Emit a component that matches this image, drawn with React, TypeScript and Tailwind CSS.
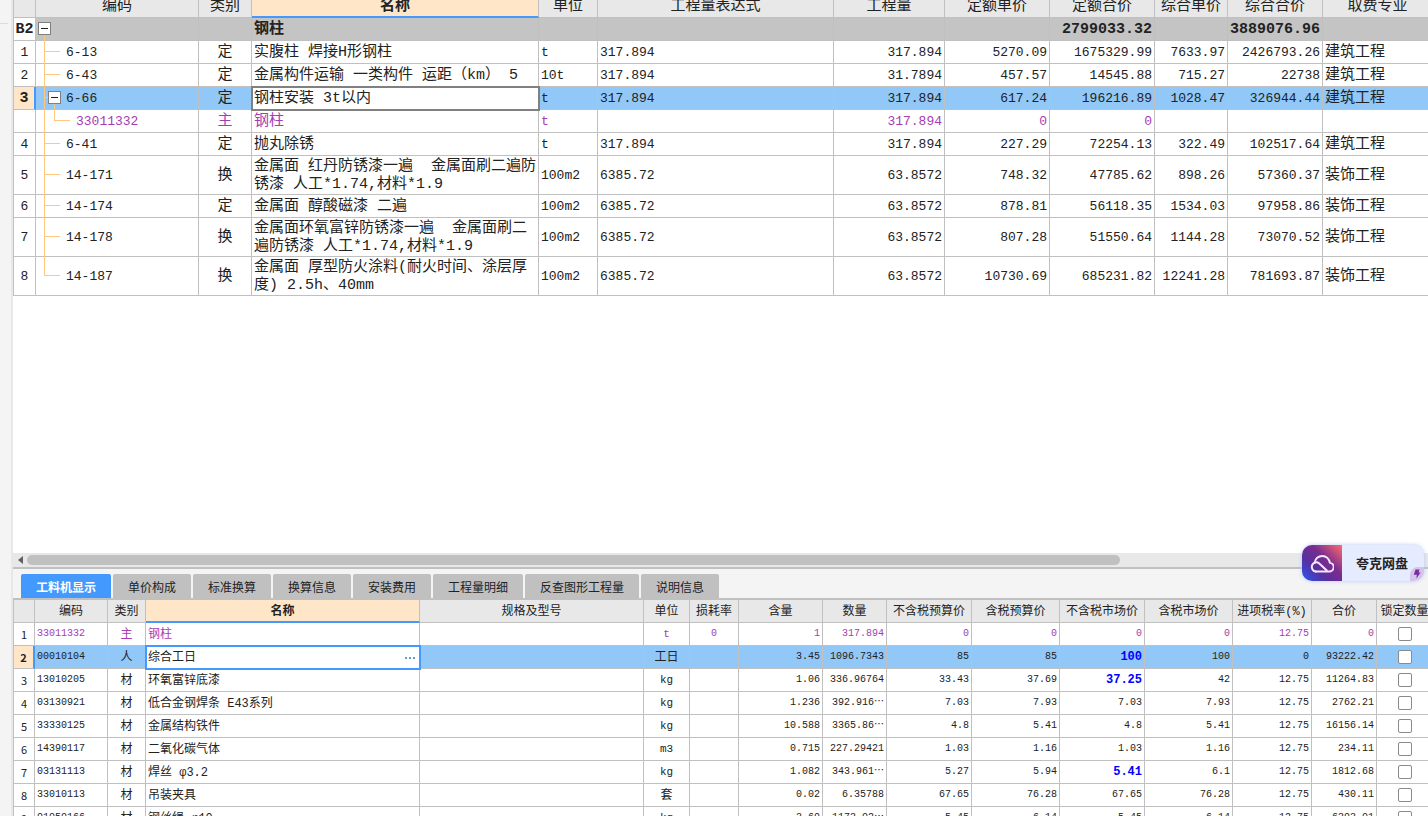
import React, { useState } from "react";
import clsx from "clsx";

interface QuotaRow {
  no: string;
  code: string;
  kind: string;
  name: string;
  unit: string;
  expr: string;
  qty: string;
  price: string;
  total: string;
  compPrice: string;
  compTotal: string;
  major: string;
  level: "root" | "item" | "parent" | "child" | "last";
}

interface MaterialRow {
  code: string;
  kind: string;
  name: string;
  unit: string;
  loss: string;
  values: string[];
  changed?: boolean;
}

const quotaColumns = [
  { title: "", width: "w-[23px]" },
  { title: "编码", width: "w-[163px]" },
  { title: "类别", width: "w-[53px]" },
  { title: "名称", width: "w-[287px]" },
  { title: "单位", width: "w-[59px]" },
  { title: "工程量表达式", width: "w-[236px]" },
  { title: "工程量", width: "w-[111px]" },
  { title: "定额单价", width: "w-[105px]" },
  { title: "定额合价", width: "w-[105px]" },
  { title: "综合单价", width: "w-[73px]" },
  { title: "综合合价", width: "w-[95px]" },
  { title: "取费专业", width: "" },
];

const quotaRows: QuotaRow[] = [
  { no: "B2", code: "", kind: "", name: "钢柱", unit: "", expr: "", qty: "", price: "", total: "2799033.32", compPrice: "", compTotal: "3889076.96", major: "", level: "root" },
  { no: "1", code: "6-13", kind: "定", name: "实腹柱 焊接H形钢柱", unit: "t", expr: "317.894", qty: "317.894", price: "5270.09", total: "1675329.99", compPrice: "7633.97", compTotal: "2426793.26", major: "建筑工程", level: "item" },
  { no: "2", code: "6-43", kind: "定", name: "金属构件运输 一类构件 运距（km） 5", unit: "10t", expr: "317.894", qty: "31.7894", price: "457.57", total: "14545.88", compPrice: "715.27", compTotal: "22738", major: "建筑工程", level: "item" },
  { no: "3", code: "6-66", kind: "定", name: "钢柱安装 3t以内", unit: "t", expr: "317.894", qty: "317.894", price: "617.24", total: "196216.89", compPrice: "1028.47", compTotal: "326944.44", major: "建筑工程", level: "parent" },
  { no: "", code: "33011332", kind: "主", name: "钢柱", unit: "t", expr: "", qty: "317.894", price: "0", total: "0", compPrice: "", compTotal: "", major: "", level: "child" },
  { no: "4", code: "6-41", kind: "定", name: "抛丸除锈", unit: "t", expr: "317.894", qty: "317.894", price: "227.29", total: "72254.13", compPrice: "322.49", compTotal: "102517.64", major: "建筑工程", level: "item" },
  { no: "5", code: "14-171", kind: "换", name: "金属面 红丹防锈漆一遍  金属面刷二遍防\n锈漆 人工*1.74,材料*1.9", unit: "100m2", expr: "6385.72", qty: "63.8572", price: "748.32", total: "47785.62", compPrice: "898.26", compTotal: "57360.37", major: "装饰工程", level: "item" },
  { no: "6", code: "14-174", kind: "定", name: "金属面 醇酸磁漆 二遍", unit: "100m2", expr: "6385.72", qty: "63.8572", price: "878.81", total: "56118.35", compPrice: "1534.03", compTotal: "97958.86", major: "装饰工程", level: "item" },
  { no: "7", code: "14-178", kind: "换", name: "金属面环氧富锌防锈漆一遍  金属面刷二\n遍防锈漆 人工*1.74,材料*1.9", unit: "100m2", expr: "6385.72", qty: "63.8572", price: "807.28", total: "51550.64", compPrice: "1144.28", compTotal: "73070.52", major: "装饰工程", level: "item" },
  { no: "8", code: "14-187", kind: "换", name: "金属面 厚型防火涂料(耐火时间、涂层厚\n度) 2.5h、40mm", unit: "100m2", expr: "6385.72", qty: "63.8572", price: "10730.69", total: "685231.82", compPrice: "12241.28", compTotal: "781693.87", major: "装饰工程", level: "last" },
];

const tabs = [
  { title: "工料机显示", width: "w-[90px]" },
  { title: "单价构成", width: "w-[78px]" },
  { title: "标准换算", width: "w-[78px]" },
  { title: "换算信息", width: "w-[78px]" },
  { title: "安装费用", width: "w-[78px]" },
  { title: "工程量明细", width: "w-[90px]" },
  { title: "反查图形工程量", width: "w-[114px]" },
  { title: "说明信息", width: "w-[78px]" },
];

const materialColumns = [
  { title: "", width: "w-[22px]" },
  { title: "编码", width: "w-[73px]" },
  { title: "类别", width: "w-[38px]" },
  { title: "名称", width: "w-[274px]" },
  { title: "规格及型号", width: "w-[224px]" },
  { title: "单位", width: "w-[46px]" },
  { title: "损耗率", width: "w-[49px]" },
  { title: "含量", width: "w-[84px]" },
  { title: "数量", width: "w-[64px]" },
  { title: "不含税预算价", width: "w-[85px]" },
  { title: "含税预算价", width: "w-[88px]" },
  { title: "不含税市场价", width: "w-[85px]" },
  { title: "含税市场价", width: "w-[88px]" },
  { title: "进项税率(%)", width: "w-[79px]" },
  { title: "合价", width: "w-[65px]" },
  { title: "锁定数量", width: "" },
];

// values: 含量, 数量, 不含税预算价, 含税预算价, 不含税市场价, 含税市场价, 进项税率, 合价
const materialRows: MaterialRow[] = [
  { code: "33011332", kind: "主", name: "钢柱", unit: "t", loss: "0", values: ["1", "317.894", "0", "0", "0", "0", "12.75", "0"] },
  { code: "00010104", kind: "人", name: "综合工日", unit: "工日", loss: "", values: ["3.45", "1096.7343", "85", "85", "100", "100", "0", "93222.42"], changed: true },
  { code: "13010205", kind: "材", name: "环氧富锌底漆", unit: "kg", loss: "", values: ["1.06", "336.96764", "33.43", "37.69", "37.25", "42", "12.75", "11264.83"], changed: true },
  { code: "03130921", kind: "材", name: "低合金钢焊条 E43系列", unit: "kg", loss: "", values: ["1.236", "392.916⋯", "7.03", "7.93", "7.03", "7.93", "12.75", "2762.21"] },
  { code: "33330125", kind: "材", name: "金属结构铁件", unit: "kg", loss: "", values: ["10.588", "3365.86⋯", "4.8", "5.41", "4.8", "5.41", "12.75", "16156.14"] },
  { code: "14390117", kind: "材", name: "二氧化碳气体", unit: "m3", loss: "", values: ["0.715", "227.29421", "1.03", "1.16", "1.03", "1.16", "12.75", "234.11"] },
  { code: "03131113", kind: "材", name: "焊丝 φ3.2", unit: "kg", loss: "", values: ["1.082", "343.961⋯", "5.27", "5.94", "5.41", "6.1", "12.75", "1812.68"], changed: true },
  { code: "33010113", kind: "材", name: "吊装夹具", unit: "套", loss: "", values: ["0.02", "6.35788", "67.65", "76.28", "67.65", "76.28", "12.75", "430.11"] },
  { code: "01050166", kind: "材", name: "钢丝绳 φ10", unit: "kg", loss: "", values: ["3.69", "1173.02⋯", "5.45", "6.14", "5.45", "6.14", "12.75", "6393.01"] },
];

const cell = "border-r border-b border-[#c0c0c0] overflow-hidden";

const ToggleBox: React.FC<{ className: string; label: string }> = ({ className, label }) => (
  <button
    aria-label={label}
    className={clsx(
      "absolute top-1 flex h-[13px] w-[13px] items-center justify-center border border-[#808080] bg-white",
      className
    )}
  >
    <span className="h-px w-[7px] bg-[#222222]" />
  </button>
);

// Connector lines drawn over the code cell
const TreeLines: React.FC<{ level: QuotaRow["level"] }> = ({ level }) => (
  <>
    {level === "root" && <span className="absolute left-2 top-4 -bottom-px w-px bg-[#ffc880]" />}
    {level === "last" && (
      <span className="absolute left-2 top-0 h-1/2 w-4 border-b border-l border-[#ffc880]" />
    )}
    {level !== "root" && level !== "last" && (
      <span className="absolute left-2 top-0 -bottom-px w-px bg-[#ffc880]" />
    )}
    {level === "item" && (
      <span className="absolute left-2 top-0 h-1/2 w-4 border-b border-[#ffc880]" />
    )}
    {level === "parent" && (
      <>
        <span className="absolute left-2 top-0 h-1/2 w-1 border-b border-[#ffc880]" />
        <span className="absolute left-[18px] top-4 -bottom-px w-px bg-[#ffc880]" />
      </>
    )}
    {level === "child" && (
      <span className="absolute left-[18px] top-0 h-1/2 w-4 border-b border-l border-[#ffc880]" />
    )}
    {level === "root" && <ToggleBox className="left-0.5" label="折叠 B2" />}
    {level === "parent" && <ToggleBox className="left-3" label="折叠 6-66" />}
  </>
);

const QuotaTable: React.FC = () => {
  const [name, setName] = useState("钢柱安装 3t以内");

  return (
    <table className="-mt-1.5 w-[calc(100%+5px)] table-fixed border-separate border-spacing-0 text-[13px] leading-[18px]">
      <colgroup>
        {quotaColumns.map((col, i) => (
          <col key={i} className={col.width} />
        ))}
      </colgroup>
      <thead>
        <tr className="h-6 bg-[#e8e8e8] text-[15px]">
          {quotaColumns.map((col, i) => (
            <th
              key={i}
              className={clsx(
                "h-6 whitespace-nowrap border-r border-[#c0c0c0] px-0 pt-[3px] pb-0 text-center",
                i === 0 && "border-l",
                col.title === "名称"
                  ? "border-b-2 border-b-[#4499ff] bg-[#ffe6c8] font-bold"
                  : "border-b font-normal"
              )}
            >
              {col.title}
            </th>
          ))}
        </tr>
      </thead>
      <tbody>
        {quotaRows.map((row, index) => {
          const root = row.level === "root";
          const selected = row.level === "parent";
          return (
            <tr
              key={index}
              className={clsx(
                "h-[23px] *:pt-0.5",
                root && "bg-[#c4c4c4] text-[15px] font-bold",
                selected && "bg-[#92c8f7]",
                row.level === "child" && "text-[#a63cb4]"
              )}
            >
              <td
                className={clsx(
                  cell,
                  "h-[23px] border-l text-center",
                  selected ? "border-r-2 border-r-[#4499ff] bg-[#ffe6c8] text-[15px] font-bold" : "bg-white"
                )}
              >
                {row.no}
              </td>
              <td
                className={clsx(
                  "relative border-r border-b border-[#c0c0c0]",
                  row.level === "child" ? "pl-10" : "pl-[30px]"
                )}
              >
                <TreeLines level={row.level} />
                {row.code}
              </td>
              <td className={clsx(cell, "text-center text-[15px]")}>{row.kind}</td>
              <td
                className={clsx(
                  "whitespace-pre border-r border-b border-[#c0c0c0] pl-0.5 text-[15px]",
                  selected && "bg-white outline-2 -outline-offset-1 outline-[#808080]"
                )}
              >
                {selected ? (
                  <input
                    aria-label="名称"
                    value={name}
                    onChange={(e) => setName(e.target.value)}
                    className="block h-[18px] w-full bg-transparent outline-none"
                  />
                ) : (
                  row.name
                )}
              </td>
              <td className={clsx(cell, "pl-0.5")}>{row.unit}</td>
              <td className={clsx(cell, "pl-0.5")}>{row.expr}</td>
              <td className={clsx(cell, "pr-0.5 text-right")}>{row.qty}</td>
              <td className={clsx(cell, "pr-0.5 text-right")}>{row.price}</td>
              <td className={clsx(cell, "pr-0.5 text-right")}>{row.total}</td>
              <td className={clsx(cell, "pr-0.5 text-right")}>{row.compPrice}</td>
              <td className={clsx(cell, "pr-0.5 text-right")}>{row.compTotal}</td>
              <td className={clsx(cell, "pl-0.5 text-[15px]")}>{row.major}</td>
            </tr>
          );
        })}
      </tbody>
    </table>
  );
};

const MaterialTable: React.FC = () => {
  const [name, setName] = useState("综合工日");

  return (
    <table className="w-[calc(100%+5px)] table-fixed border-separate border-spacing-0 text-[10px] leading-4">
      <colgroup>
        {materialColumns.map((col, i) => (
          <col key={i} className={col.width} />
        ))}
      </colgroup>
      <thead>
        <tr className="h-[23px] bg-[#e8e8e8] text-xs">
          {materialColumns.map((col, i) => (
            <th
              key={i}
              className={clsx(
                "h-[23px] whitespace-nowrap border-r border-[#c0c0c0] px-0 pt-0.5 pb-0 text-center",
                i === 0 && "border-l",
                col.title === "名称"
                  ? "border-b-2 border-b-[#4499ff] bg-[#ffe6c8] font-bold"
                  : "border-b font-normal"
              )}
            >
              {col.title}
            </th>
          ))}
        </tr>
      </thead>
      <tbody>
        {materialRows.map((row, index) => {
          const selected = index === 1;
          return (
            <tr
              key={row.code}
              className={clsx(
                "h-[23px]",
                selected && "bg-[#92c8f7]",
                index === 0 && "text-[#a63cb4]"
              )}
            >
              <td
                className={clsx(
                  cell,
                  "h-[23px] border-l text-center text-[11px] text-[#222222] [font-family:'Noto_Sans_CJK_SC',sans-serif]",
                  selected ? "border-r-2 border-r-[#4499ff] bg-[#ffe6c8] font-bold" : "bg-white"
                )}
              >
                {index + 1}
              </td>
              <td className={clsx(cell, "pl-0.5")}>{row.code}</td>
              <td className={clsx(cell, "pt-0.5 text-center text-xs")}>{row.kind}</td>
              <td
                className={clsx(
                  "whitespace-pre border-r border-b border-[#c0c0c0] pt-0.5 pl-0.5 text-xs",
                  selected && "bg-white outline-2 -outline-offset-1 outline-[#4499ff]"
                )}
              >
                {selected ? (
                  <div className="flex items-center pr-1">
                    <input
                      aria-label="名称"
                      value={name}
                      onChange={(e) => setName(e.target.value)}
                      className="h-4 min-w-0 flex-1 bg-transparent outline-none"
                    />
                    <button aria-label="选择" className="flex gap-0.5">
                      <span className="h-0.5 w-0.5 bg-[#5a9fd4]" />
                      <span className="h-0.5 w-0.5 bg-[#5a9fd4]" />
                      <span className="h-0.5 w-0.5 bg-[#5a9fd4]" />
                    </button>
                  </div>
                ) : (
                  row.name
                )}
              </td>
              <td className={cell} />
              <td className={clsx(cell, "text-center", /[a-z]/.test(row.unit) ? "text-[11px]" : "pt-0.5 text-xs")}>
                {row.unit}
              </td>
              <td className={clsx(cell, "text-center")}>{row.loss}</td>
              {row.values.map((value, i) => (
                <td
                  key={i}
                  className={clsx(
                    cell,
                    "whitespace-nowrap pr-0.5 text-right",
                    row.changed && i === 4 && "text-xs font-bold text-[#0000ff]"
                  )}
                >
                  {value}
                </td>
              ))}
              <td className={cell}>
                <input
                  type="checkbox"
                  aria-label={`锁定数量 ${row.code}`}
                  className="mx-auto block h-3.5 w-3.5 appearance-none rounded-xs border border-[#8a8a8a] bg-white checked:bg-[#4499ff]"
                />
              </td>
            </tr>
          );
        })}
      </tbody>
    </table>
  );
};

const CloudDriveBadge: React.FC = () => (
  <button className="absolute right-1 bottom-[235px] flex h-9 w-[122px] items-center overflow-hidden rounded-[10px] bg-[#e6ecff] shadow-[0_0_4px_#b4c8f5]">
    <span className="flex h-9 w-10 items-center justify-center bg-[linear-gradient(45deg,#2855f5_0%,#5a2f9c_35%,#7a2c90_60%,#ff6a6c_100%)]">
      <svg width="24" height="20" viewBox="0 0 24 20" fill="none" stroke="#f3e8ff" strokeWidth="2" strokeLinecap="round" strokeLinejoin="round">
        <path d="M5.6 18.5h13.2a4.4 4.4 0 0 0 1-8.8A7.6 7.6 0 0 0 4.7 9.6" />
        <path d="M16.8 17.4 9 10.2A4.6 4.6 0 1 0 5.6 18.5" />
      </svg>
    </span>
    <span className="flex-1 pl-3.5 text-left text-[13px] leading-4 font-bold whitespace-nowrap text-[#222222] [font-family:'Noto_Sans_CJK_SC',sans-serif]">
      夸克网盘
    </span>
    <span className="absolute right-0 bottom-0 flex h-3.5 w-3.5 items-center justify-center rounded-tl-lg bg-[#d5c3ea]">
      <svg width="8" height="10" viewBox="0 0 8 10">
        <path d="M2.5 0.5h4L5.6 3.4H7.6L3.4 9.6 3.8 5.8H0.8Z" fill="#7a2ba0" />
      </svg>
    </span>
  </button>
);

const App: React.FC = () => {
  const [activeTab, setActiveTab] = useState("工料机显示");

  return (
    <div className="relative flex h-screen overflow-hidden bg-white text-[#222222] [font-family:'Liberation_Mono','Noto_Sans_CJK_SC',monospace]">
      <div className="w-[13px] shrink-0 border-r-2 border-[#e8e8e8] bg-[#f4f4f4]">
        <div className="mt-[23px] h-px w-2 bg-[#dcdcdc]" />
      </div>

      <div className="flex min-w-0 flex-1 flex-col">
        <div className="min-h-0 flex-1 overflow-hidden">
          <QuotaTable />
        </div>

        <div className="flex h-4 shrink-0 items-center border-b-2 border-[#c0c0c0] bg-[#e8e8e8]">
          <button aria-label="向左滚动" className="flex w-3.5 justify-center">
            <svg width="5" height="8" viewBox="0 0 5 8">
              <path d="M5 0v8L0 4Z" fill="#606060" />
            </svg>
          </button>
          <div className="flex-1">
            <div className="h-2.5 w-[78%] rounded-full bg-[#c0c0c0]" />
          </div>
        </div>

        <div className="h-[247px] shrink-0 overflow-hidden">
          <div
            role="tablist"
            className="flex h-[31px] items-end gap-0.5 border-b-2 border-[#c0c0c0] bg-[#f4f4f4] pl-2 [font-family:'Noto_Sans_CJK_SC',sans-serif]"
          >
            {tabs.map((tab) => (
              <button
                key={tab.title}
                role="tab"
                aria-selected={activeTab === tab.title}
                onClick={() => setActiveTab(tab.title)}
                className={clsx(
                  "h-6 rounded-t-xs pt-0.5 text-xs whitespace-nowrap",
                  tab.width,
                  activeTab === tab.title ? "bg-[#4499ff] font-bold text-white" : "bg-[#c0c0c0]"
                )}
              >
                {tab.title}
              </button>
            ))}
          </div>
          <MaterialTable />
        </div>
      </div>

      <CloudDriveBadge />
    </div>
  );
};

export default App;
